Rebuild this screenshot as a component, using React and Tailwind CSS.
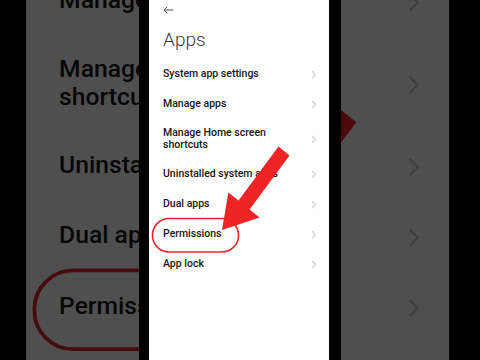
import React from 'react';

const items = [
  ['System app settings'],
  ['Manage apps'],
  ['Manage Home screen', 'shortcuts'],
  ['Uninstalled system apps'],
  ['Dual apps'],
  ['Permissions'],
  ['App lock'],
];

const Chevron = () => (
  <svg width="6" height="9" viewBox="0 0 6 9" className="text-[#cfcfcf] shrink-0">
    <path d="M1.2 1l3.4 3.5L1.2 8" fill="none" stroke="currentColor" strokeWidth="1.1" />
  </svg>
);

// the phone screen, used once sharp in the middle and once zoomed behind it
const Screen = () => (
  <div className="relative w-[180px] h-[360px] bg-white pl-[14px] pr-[12px] font-['Roboto','Noto_Sans',sans-serif]">
    <div className="h-[28px] pt-[6px]">
      <svg width="11" height="8" viewBox="0 0 11 8">
        <path d="M10.5 4H1M4.2 0.8L1 4l3.2 3.2" fill="none" stroke="#555" strokeWidth="1" />
      </svg>
    </div>
    <div className="text-[19px] leading-[24px] font-light text-[#3a3a3a]">Apps</div>
    <div className="mt-[7px] flex flex-col">
      {items.map((lines) => (
        <div
          key={lines[0]}
          className={`flex items-center justify-between ${lines.length > 1 ? 'h-[40px]' : 'h-[30px]'}`}
        >
          <div className="text-[10.5px] leading-[12px] font-medium text-[#151515]">
            {lines.map((l) => (
              <div key={l}>{l}</div>
            ))}
          </div>
          <Chevron />
        </div>
      ))}
    </div>

    {/* annotation: circle + arrow */}
    <svg className="absolute inset-0" width="180" height="360" viewBox="0 0 180 360">
      <rect x="3.5" y="218.5" width="86" height="33.5" rx="16.5" fill="none" stroke="#e2262b" strokeWidth="1.6" />
      <polygon
        points="129.5,146.6 140.5,155.4 100.5,209.4 110.6,217.6 73,230 79.4,192.4 89.5,200.6"
        fill="#f02424"
      />
    </svg>
  </div>
);

export default function App() {
  return (
    <div className="relative w-[480px] h-[360px] bg-black overflow-hidden">
      {/* zoomed, dimmed copy behind */}
      <div className="absolute left-[26px] right-[26px] top-0 bottom-0 overflow-hidden">
        <div className="absolute left-[123px] top-0 origin-[91px_180px] scale-[2.35]">
          <Screen />
        </div>
        <div className="absolute inset-0 bg-black/[0.69]" />
      </div>

      {/* sharp phone screen */}
      <div className="absolute inset-0 flex justify-center">
        <div className="bg-black pl-[10px] pr-[12px]">
          <Screen />
        </div>
      </div>
    </div>
  );
}
